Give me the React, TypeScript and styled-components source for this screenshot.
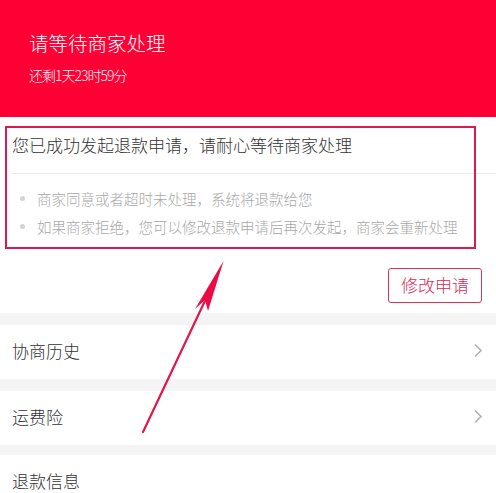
import React from "react";
import styled, { createGlobalStyle } from "styled-components";

const Global = createGlobalStyle`
  html, body { margin: 0; padding: 0; background: #fff; }
  body { font-family: "Noto Sans CJK SC", "Noto Sans", sans-serif; }
  * { box-sizing: border-box; }
`;

const Page = styled.div`
  position: relative;
  width: 496px;
  height: 493px;
  overflow: hidden;
  background: #fff;
`;

const Header = styled.header`
  height: 117px;
  background: #fe0034;
  padding: 30px 29px 0;
  color: #fff;
`;

const HeaderTitle = styled.div`
  font-size: 19.5px;
  line-height: 26px;
  font-weight: 300;
`;

const HeaderSub = styled.div`
  margin-top: 9px;
  font-size: 14px;
  line-height: 20px;
  letter-spacing: -1px;
  font-weight: 300;
  opacity: 0.95;
`;

const Notice = styled.section`
  padding-top: 16px;
`;

const NoticeTitle = styled.div`
  padding: 0 12px;
  font-size: 17px;
  line-height: 24px;
  color: #333;
  font-weight: 300;
`;

const Divider = styled.div`
  margin: 16px 0 0 12px;
  height: 1px;
  background: #ebebeb;
`;

const BulletList = styled.ul`
  list-style: none;
  margin: 10px 0 0;
  padding: 0 0 0 20px;
`;

const Bullet = styled.li`
  display: flex;
  align-items: center;
  gap: 12px;
  height: 28px;
  font-size: 14.5px;
  color: #a8a8a8;
  font-weight: 300;
  &::before {
    content: "";
    width: 5px;
    height: 5px;
    border-radius: 50%;
    background: #d4d4d4;
    flex: none;
  }
`;

const ButtonRow = styled.div`
  display: flex;
  justify-content: flex-end;
  padding: 28px 14px 10px;
`;

const OutlineButton = styled.button`
  width: 94px;
  height: 35px;
  border: 1.5px solid #d9325c;
  border-radius: 3px;
  background: #fff;
  color: #d62a56;
  font-family: inherit;
  font-size: 17px;
  font-weight: 300;
  padding: 0 0 2px;
`;

const Gap = styled.div<{ $h: number }>`
  height: ${(p) => p.$h}px;
  background: #f4f4f4;
`;

const Row = styled.div`
  height: 54px;
  display: flex;
  align-items: center;
  justify-content: space-between;
  padding: 0 13px 4px 12px;
  font-size: 17px;
  color: #333;
  font-weight: 300;
`;

const Highlight = styled.div`
  position: absolute;
  left: 5px;
  top: 126px;
  width: 471px;
  height: 123px;
  border: 2px solid #d81c4e;
`;

const Overlay = styled.svg`
  position: absolute;
  left: 0;
  top: 0;
  pointer-events: none;
`;

const Chevron = () => (
  <svg width="10" height="15" viewBox="0 0 10 15">
    <path d="M2 1.5 L8 7.5 L2 13.5" fill="none" stroke="#b0b0b0" strokeWidth="1.6" />
  </svg>
);

export default function App() {
  return (
    <Page>
      <Global />
      <Header>
        <HeaderTitle>请等待商家处理</HeaderTitle>
        <HeaderSub>还剩1天23时59分</HeaderSub>
      </Header>
      <Notice>
        <NoticeTitle>您已成功发起退款申请，请耐心等待商家处理</NoticeTitle>
        <Divider />
        <BulletList>
          <Bullet>商家同意或者超时未处理，系统将退款给您</Bullet>
          <Bullet>如果商家拒绝，您可以修改退款申请后再次发起，商家会重新处理</Bullet>
        </BulletList>
        <ButtonRow>
          <OutlineButton>修改申请</OutlineButton>
        </ButtonRow>
      </Notice>
      <Gap $h={12} />
      <Row>
        协商历史
        <Chevron />
      </Row>
      <Gap $h={12} />
      <Row>
        运费险
        <Chevron />
      </Row>
      <Gap $h={10} />
      <Row>退款信息</Row>
      <Highlight />
      <Overlay width="496" height="493" viewBox="0 0 496 493">
        <line x1="143" y1="432" x2="212" y2="286" stroke="#e3164c" strokeWidth="2.2" strokeLinecap="round" />
        <path d="M223.5 261 L208 311 L205 300 L195 309 Z" fill="#ee0b45" />
      </Overlay>
    </Page>
  );
}
